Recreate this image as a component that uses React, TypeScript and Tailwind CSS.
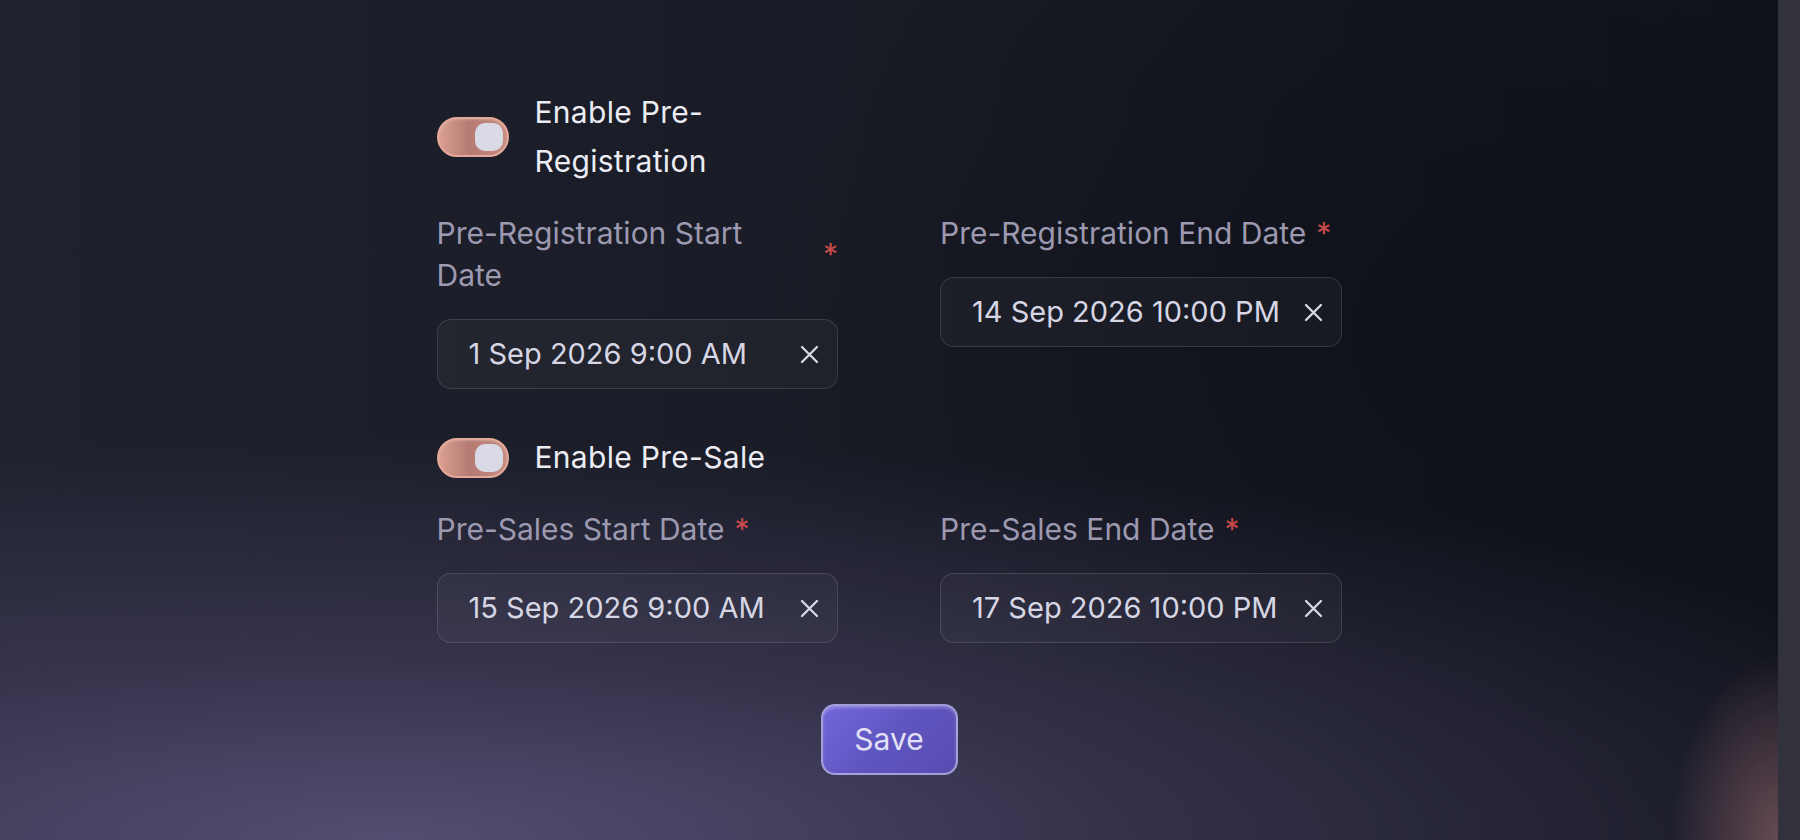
import React from 'react';

const FONT = "font-['Inter','Noto_Sans',sans-serif]";

function Toggle({ label }: { label: string }) {
    return (
        <div className="flex w-[400px] items-center gap-[26px]">
            <div className="flex h-[40px] w-[72px] shrink-0 items-center justify-end rounded-full border-2 border-[#e3a898] bg-[linear-gradient(90deg,#dba092_0%,#b57a72_45%,#c68c81_100%)] pr-[4px] shadow-[inset_0_1px_2px_rgba(255,255,255,0.25)]">
                <div className="h-[28px] w-[28px] rounded-[10px] bg-[#d9dae5]" />
            </div>
            <span className="text-[30px] leading-[49px] tracking-[0.01em] text-[#ececf4]">{label}</span>
        </div>
    );
}

function DateField({ label, value }: { label: string; value: string }) {
    return (
        <div className="flex flex-col">
            <label className="flex items-center gap-[10px] text-[30px] leading-[42px] text-[#9c99b0]">
                <span>{label}</span>
                <span className="text-[#c94a4a]">*</span>
            </label>
            <div className="mt-[23px] flex h-[70px] items-center justify-between rounded-[14px] border-[1.5px] border-white/[0.12] bg-white/[0.03] pl-[31px] pr-[18px]">
                <span className="text-[29px] text-[#d6d6e4]">{value}</span>
                <svg width="19" height="19" viewBox="0 0 19 19" fill="none" stroke="#d8d8e4" strokeWidth="2.3" strokeLinecap="round">
                    <path d="M2 2L17 17M17 2L2 17" />
                </svg>
            </div>
        </div>
    );
}

export default function App() {
    return (
        <div className={`flex h-[840px] w-full overflow-hidden ${FONT}`}>
            <main className="flex-1 bg-[image:radial-gradient(ellipse_6%_22%_at_100%_100%,rgba(120,86,92,0.8)_0%,transparent_100%),radial-gradient(ellipse_95%_48%_at_22%_100%,#544e72_0%,rgba(74,69,104,0.55)_45%,transparent_100%),radial-gradient(ellipse_45%_75%_at_88%_40%,#0f111a_0%,transparent_100%),linear-gradient(90deg,#1f212d_0%,#161822_70%,#11131b_100%)]">
                <div className="mx-auto flex w-[905px] flex-col pt-[88px]">
                    {/* 사전 등록 */}
                    <Toggle label="Enable Pre-Registration" />
                    <div className="mt-[26px] grid grid-cols-2 gap-x-[102px]">
                        <DateField label="Pre-Registration Start Date" value="1 Sep 2026 9:00 AM" />
                        <DateField label="Pre-Registration End Date" value="14 Sep 2026 10:00 PM" />
                    </div>

                    {/* 사전 판매 */}
                    <div className="mt-[44px]">
                        <Toggle label="Enable Pre-Sale" />
                    </div>
                    <div className="mt-[26px] grid grid-cols-2 gap-x-[102px]">
                        <DateField label="Pre-Sales Start Date" value="15 Sep 2026 9:00 AM" />
                        <DateField label="Pre-Sales End Date" value="17 Sep 2026 10:00 PM" />
                    </div>

                    <div className="mt-[61px] flex justify-center">
                        <button className="h-[71px] w-[137px] rounded-[14px] border-2 border-[#b4afe0]/80 bg-[linear-gradient(135deg,#7268db_0%,#5f55c0_50%,#574db0_100%)] text-[30px] text-[#e2e0f6] shadow-[inset_0_2px_3px_rgba(255,255,255,0.25)]">
                            Save
                        </button>
                    </div>
                </div>
            </main>
            <div className="w-[22px] shrink-0 bg-[#31323c]" />
        </div>
    );
}
